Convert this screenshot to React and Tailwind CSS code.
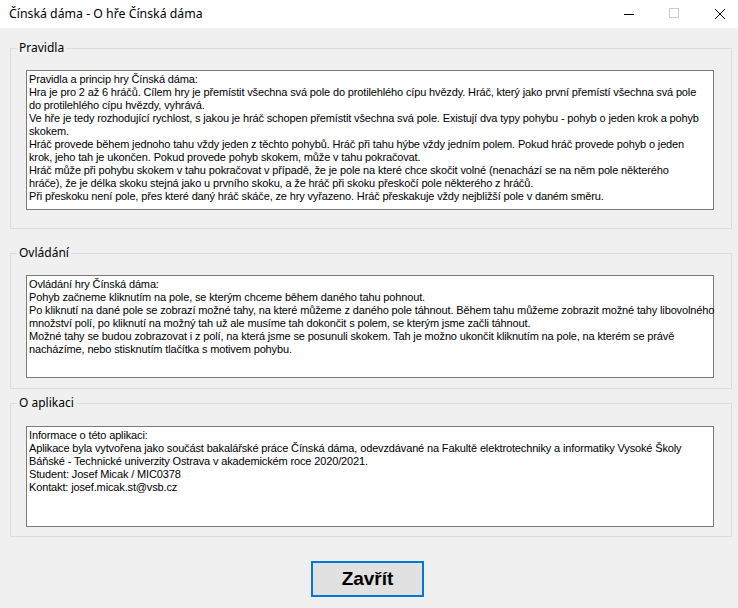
import React from "react";

const rules = [
  "Pravidla a princip hry Čínská dáma:",
  "Hra je pro 2 až 6 hráčů. Cílem hry je přemístit všechna svá pole do protilehlého cípu hvězdy. Hráč, který jako první přemístí všechna svá pole",
  "do protilehlého cípu hvězdy, vyhrává.",
  "Ve hře je tedy rozhodující rychlost, s jakou je hráč schopen přemístit všechna svá pole. Existují dva typy pohybu - pohyb o jeden krok a pohyb",
  "skokem.",
  "Hráč provede během jednoho tahu vždy jeden z těchto pohybů. Hráč při tahu hýbe vždy jedním polem. Pokud hráč provede pohyb o jeden",
  "krok, jeho tah je ukončen. Pokud provede pohyb skokem, může v tahu pokračovat.",
  "Hráč může při pohybu skokem v tahu pokračovat v případě, že je pole na které chce skočit volné (nenachází se na něm pole některého",
  "hráče), že je délka skoku stejná jako u prvního skoku, a že hráč při skoku přeskočí pole některého z hráčů.",
  "Při přeskoku není pole, přes které daný hráč skáče, ze hry vyřazeno. Hráč přeskakuje vždy nejbližší pole v daném směru.",
];

const controls = [
  "Ovládání hry Čínská dáma:",
  "Pohyb začneme kliknutím na pole, se kterým chceme během daného tahu pohnout.",
  "Po kliknutí na dané pole se zobrazí možné tahy, na které můžeme z daného pole táhnout. Během tahu můžeme zobrazit možné tahy libovolného",
  "množství polí, po kliknutí na možný tah už ale musíme tah dokončit s polem, se kterým jsme začli táhnout.",
  "Možné tahy se budou zobrazovat i z polí, na která jsme se posunuli skokem. Tah je možno ukončit kliknutím na pole, na kterém se právě",
  "nacházíme, nebo stisknutím tlačítka s motivem pohybu.",
];

const about = [
  "Informace o této aplikaci:",
  "Aplikace byla vytvořena jako součást bakalářské práce Čínská dáma, odevzdávané na Fakultě elektrotechniky a informatiky Vysoké Školy",
  "Báňské - Technické univerzity Ostrava v akademickém roce 2020/2021.",
  "Student: Josef Micak / MIC0378",
  "Kontakt: josef.micak.st@vsb.cz",
];

function GroupBox({ title, lines, className, boxClass }) {
  return (
    <div className={`relative border border-[#dcdcdc] w-[722px] pl-[15px] ${className}`}>
      <span className="absolute left-[6px] -top-[9px] px-[2px] bg-[#f0f0f0] text-[12px] leading-[16px] text-black font-['Noto_Sans',sans-serif]">
        {title}
      </span>
      <div
        className={`w-[688px] border border-[#7a7a7a] bg-white pl-[2px] pt-[2px] text-[11px] leading-[13px] tracking-[-0.14px] text-black font-['Liberation_Sans',sans-serif] ${boxClass}`}
      >
        {lines.map((line, i) => (
          <div key={i} className="whitespace-nowrap">
            {line}
          </div>
        ))}
      </div>
    </div>
  );
}

export default function App() {
  return (
    <div className="w-[738px] h-[608px] bg-[#f0f0f0] flex flex-col overflow-hidden">
      {/* Title bar */}
      <div className="h-[28px] bg-white flex items-center pl-[9px] pr-[13px] shrink-0">
        <span className="text-[12.3px] text-black font-['Noto_Sans',sans-serif]">
          Čínská dáma - O hře Čínská dáma
        </span>
        <div className="ml-auto flex items-center gap-[35px]">
          <svg width="10" height="10" viewBox="0 0 10 10">
            <path d="M0 5.5H10" stroke="#000" strokeWidth="1" />
          </svg>
          <svg width="10" height="10" viewBox="0 0 10 10" className="mr-[1px] -mt-[3px]">
            <rect x="0.5" y="0.5" width="9" height="9" fill="none" stroke="#cccccc" strokeWidth="1" />
          </svg>
          <svg width="10" height="10" viewBox="0 0 10 10" className="-mt-[1px]">
            <path d="M0 0L10 10M10 0L0 10" stroke="#000" strokeWidth="1" />
          </svg>
        </div>
      </div>

      <div className="flex flex-col pl-[10px] pt-[20px]">
        <GroupBox title="Pravidla" lines={rules} className="h-[181px] pt-[21px]" boxClass="h-[140px]" />
        <GroupBox title="Ovládání" lines={controls} className="mt-[24px] h-[136px] pt-[21px]" boxClass="h-[103px]" />
        <GroupBox title="O aplikaci" lines={about} className="mt-[14px] h-[134px] pt-[22px]" boxClass="h-[101px]" />

        <button className="mt-[24px] ml-[301px] w-[113px] h-[36px] border-2 border-[#0078d7] bg-[#e1e1e1] text-[19px] font-bold text-black font-['Liberation_Sans',sans-serif] flex items-center justify-center">
          Zavřít
        </button>
      </div>
    </div>
  );
}
